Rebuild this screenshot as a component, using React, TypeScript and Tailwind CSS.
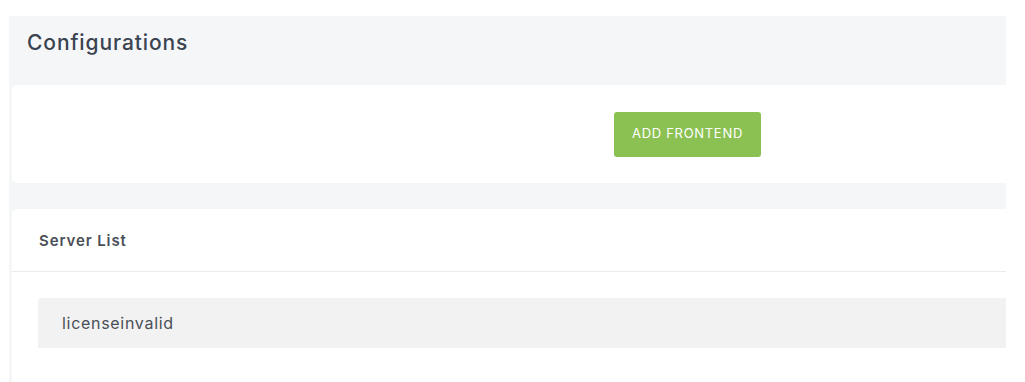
export default function App() {
  return (
    <div className="w-[1025px] h-[382px] bg-white overflow-hidden font-['Inter',sans-serif]">
      <div className="mt-4 ml-[9px] w-[997px] h-[366px] bg-[#f5f6f8] overflow-hidden flex flex-col">
        {/* Page title */}
        <div className="h-[69px] pl-[18px] pt-[14px]">
          <h1 className="text-[21px] leading-[26px] text-[#3a4350] font-medium tracking-[0.9px]">Configurations</h1>
        </div>

        {/* Actions card */}
        <div className="ml-[3px] w-[1010px] h-[98px] bg-white rounded-[5px] flex items-center pl-[602px] shrink-0">
          <button className="w-[147px] h-[45px] bg-[#8bc152] rounded-[3px] text-white text-[13px] tracking-[0.7px]">
            ADD FRONTEND
          </button>
        </div>

        {/* Server list card */}
        <div className="ml-[3px] mt-[26px] w-[1010px] flex-1 bg-white rounded-t-[5px]">
          <div className="h-[63px] flex items-center pl-[27px] pt-[2px] border-b border-[#e9ebee]">
            <h2 className="text-[15px] font-semibold text-[#4a4f57] tracking-[0.9px]">Server List</h2>
          </div>
          <div className="pl-[26px] pt-[26px]">
            <div className="h-[50px] bg-[#f2f2f2] rounded-tl-[4px] flex items-center pl-[24px]">
              <span className="text-[16px] text-[#4a4f57] tracking-[0.7px]">licenseinvalid</span>
            </div>
          </div>
        </div>
      </div>
    </div>
  );
}
